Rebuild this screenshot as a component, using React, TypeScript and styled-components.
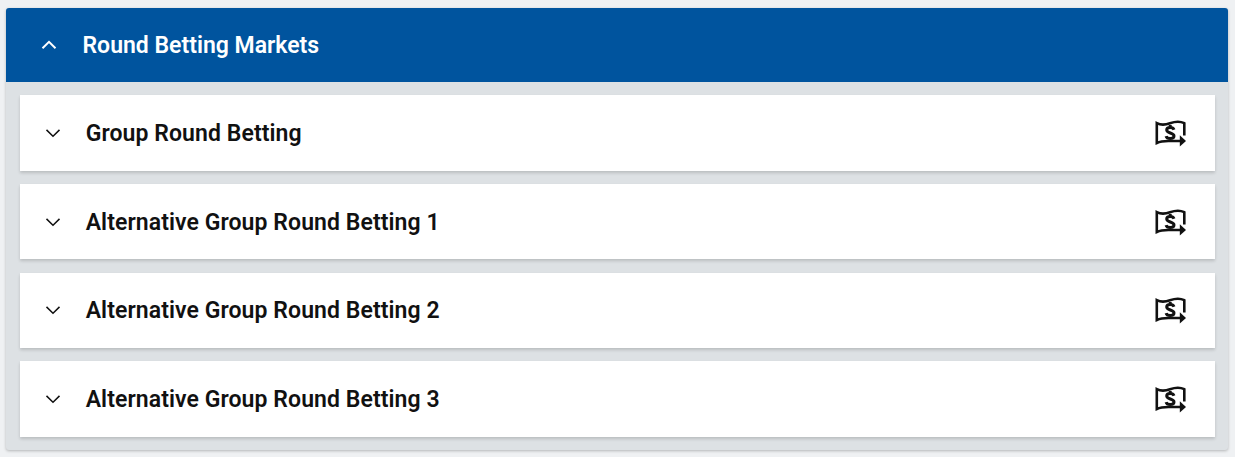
import React from "react";
import styled, { createGlobalStyle } from "styled-components";

const GlobalStyle = createGlobalStyle`
  * { box-sizing: border-box; }
  body {
    margin: 0;
    background: #eff1f3;
    font-family: Roboto, "Liberation Sans", sans-serif;
    overflow: hidden;
  }
`;

const Page = styled.main`
  height: 457px;
  padding: 8px 7px 0 6px;
`;

const Panel = styled.section`
  height: 442px;
  background: #dde1e4;
  border-radius: 3px;
  box-shadow: 0 1px 3px rgba(0, 0, 0, 0.25);
`;

const PanelHeader = styled.header`
  display: flex;
  align-items: center;
  gap: 25.5px;
  height: 74px;
  padding-left: 35px;
  border-radius: 3px 3px 0 0;
  background: #00549e;
  color: #fff;
`;

const List = styled.div`
  display: flex;
  flex-direction: column;
  gap: 13.17px;
  padding: 13.2px 13px 0 14px;
`;

const Row = styled.div`
  display: flex;
  align-items: center;
  gap: 24.7px;
  height: 75.5px;
  padding: 0 28px 0 25px;
  background: #fff;
  color: #111;
  box-shadow: 0 2px 3px rgba(0, 0, 0, 0.16);
`;

const Title = styled.h2<{ $spacing: number }>`
  flex: 1;
  margin: 0;
  padding-top: 2px;
  font-size: 23px;
  line-height: 32px;
  font-weight: 600;
  letter-spacing: ${(p) => p.$spacing}px;
`;

const Icon = styled.svg`
  display: block;
  flex: none;
  fill: none;
  stroke: currentColor;
`;

const Chevron = ({ up = false }: { up?: boolean }) => (
  <Icon width="16" height="16" viewBox="0 0 16 16" strokeWidth={up ? 2 : 1.5}>
    <path d={up ? "M1.5 11.2 8 4.8l6.5 6.4" : "M1.5 4.9 8 11.3l6.5-6.4"} />
  </Icon>
);

const CashOut = () => (
  <Icon width="32" height="28" viewBox="0 0 32 28" strokeWidth="2.6">
    <path d="M26 22H14.5C9 21.9 5.5 22.2 1.8 24V4.2C6.5 6.6 10.5 5.9 15 4.3S24.5 1.9 29.3 4.2V16.5" />
    <path
      strokeWidth="3"
      d="M19 10.7C18.4 9.2 17 8.6 15.2 8.6c-2.2 0-3.5 1-3.5 2.4 0 3.5 7.3 2.5 7.3 6 0 1.8-1.5 2.6-3.8 2.6-2.2 0-3.7-.8-4.1-2.4M15.2 6v3M15.2 19v3"
    />
    <path d="M24.8 16.2 31 22l-6.2 5.6z" fill="currentColor" stroke="none" />
  </Icon>
);

const markets = [
  "Group Round Betting",
  "Alternative Group Round Betting 1",
  "Alternative Group Round Betting 2",
  "Alternative Group Round Betting 3",
];

export default function App() {
  return (
    <>
      <GlobalStyle />
      <Page>
        <Panel>
          <PanelHeader>
            <Chevron up />
            <Title $spacing={0}>Round Betting Markets</Title>
          </PanelHeader>
          <List>
            {markets.map((name) => (
              <Row key={name}>
                <Chevron />
                <Title $spacing={0.08}>{name}</Title>
                <CashOut />
              </Row>
            ))}
          </List>
        </Panel>
      </Page>
    </>
  );
}
